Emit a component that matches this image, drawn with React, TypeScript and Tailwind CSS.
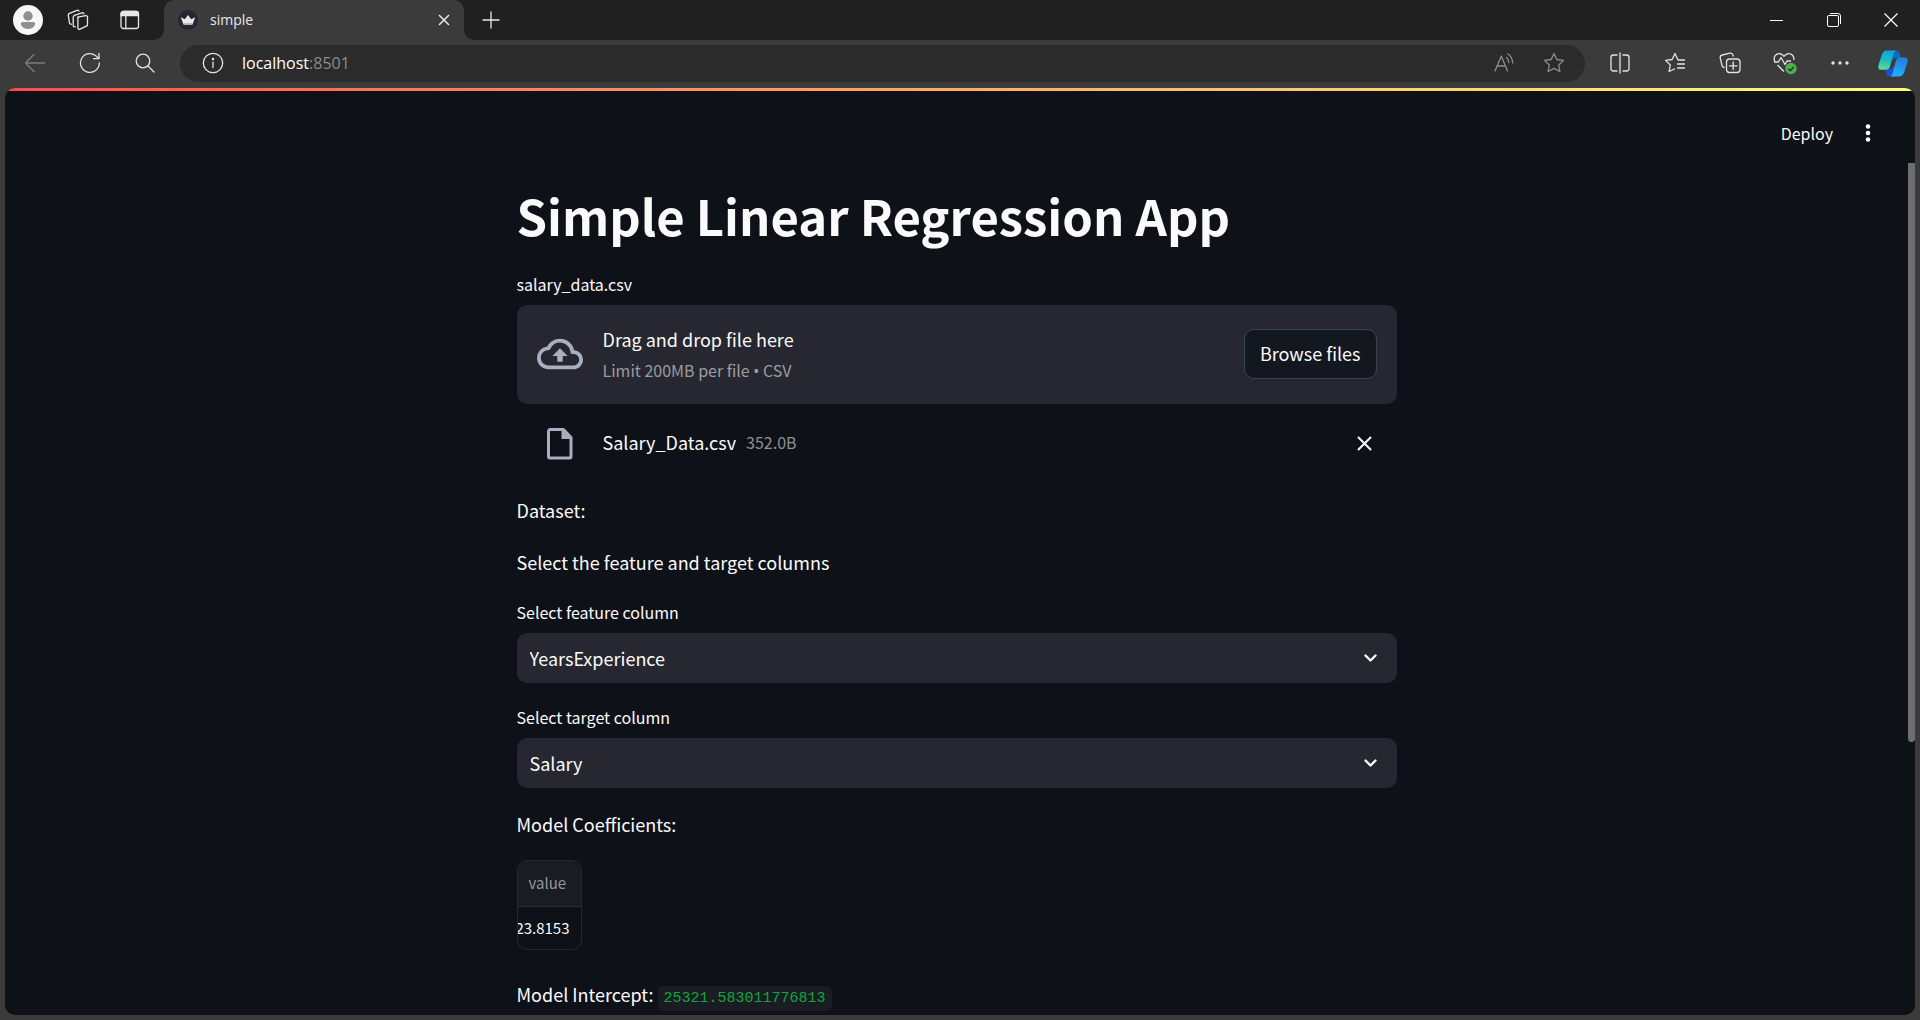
import { useState } from "react";
import type { ReactNode } from "react";

const columns = ["YearsExperience", "Salary"];

function Svg({ size = 22, children }: { size?: number; children: ReactNode }) {
  return (
    <svg
      width={size}
      height={size}
      viewBox="0 0 22 22"
      fill="none"
      stroke="currentColor"
      strokeWidth="1.3"
      strokeLinecap="round"
      strokeLinejoin="round"
      aria-hidden="true"
    >
      {children}
    </svg>
  );
}

function ToolButton({ label, className = "", children }: { label: string; className?: string; children: ReactNode }) {
  return (
    <button type="button" aria-label={label} className={`flex h-full shrink-0 items-center justify-center ${className}`}>
      {children}
    </button>
  );
}

function TabStrip() {
  return (
    <div className="flex h-10 items-stretch bg-[#202020] pr-px text-[#e8e8e8]">
      <ToolButton label="Profile" className="w-14">
        <svg width="30" height="30" viewBox="0 0 30 30" aria-hidden="true">
          <circle cx="15" cy="15" r="15" fill="#f7f7f7" />
          <circle cx="15" cy="11" r="4.7" fill="#8f8f8f" />
          <path d="M9.5 17h11a1.6 1.6 0 0 1 1.6 1.6c0 3-3 5.4-7.100 5.400s-7.100-2.400-7.100-5.400A1.600 1.600 0 0 1 9.500 17z" fill="#8f8f8f" />
        </svg>
      </ToolButton>
      <ToolButton label="Workspaces" className="w-[43px]">
        <Svg>
          <path d="M10.500 8.200l8.300-1.500a1.500 1.500 0 0 1 1.700 1.500v7.500a1.500 1.500 0 0 1-1.200 1.500l-6.200 3a1.500 1.500 0 0 1-2-.6 1.500 1.500 0 0 1-.2-.8V9.500a1.400 1.400 0 0 1 .8-1.300z" />
          <path d="M8.200 17.600a1.500 1.500 0 0 1-2-.7V8a2 2 0 0 1 1.200-1.700l7.600-2.500a1.500 1.500 0 0 1 1.900 1" />
          <path d="M4.400 15.200a1.500 1.500 0 0 1-1.900-1.200L1.300 6.300a1.800 1.800 0 0 1 1.200-1.900L10 1.300a1.500 1.500 0 0 1 1.900.8" />
        </Svg>
      </ToolButton>
      <ToolButton label="Tab actions" className="w-[55px] pl-[7px]">
        <Svg>
          <path d="M4.500 2.500h12.500a2.500 2.500 0 0 1 2.500 2.500v1.500H2V5a2.500 2.500 0 0 1 2.500-2.500z" fill="currentColor" />
          <rect x="2" y="2.500" width="17.500" height="17" rx="2.500" />
          <path d="M6.800 7v12" />
        </Svg>
      </ToolButton>
      <svg width="10" height="10" viewBox="0 0 10 10" className="self-end" aria-hidden="true">
        <path d="M10 0v10H0A10 10 0 0 0 10 0z" fill="#3b3b3b" />
      </svg>
      <div className="flex w-[300px] items-center rounded-t-[10px] bg-[#3b3b3b] pl-[14px] pr-3">
        <svg width="20" height="20" viewBox="0 0 20 20" aria-hidden="true">
          <circle cx="10" cy="10" r="10" fill="#262730" />
          <path d="M2.800 7.200l4 2 3.200-4.200 3.200 4.200 4-2-2.700 7.300H5.500z" fill="#e9e9ea" />
          <path d="M5.300 13h9.400l-.6 1.800H5.900z" fill="#bdbdc2" />
        </svg>
        <span className="ml-3 flex-1 text-[14px] leading-5">simple</span>
        <button type="button" aria-label="Close tab" className="flex size-4 items-center justify-center">
          <svg width="12" height="12" viewBox="0 0 12 12" stroke="currentColor" strokeWidth="1.5" aria-hidden="true">
            <path d="M1 1l10 10M11 1L1 11" />
          </svg>
        </button>
      </div>
      <svg width="10" height="10" viewBox="0 0 10 10" className="self-end" aria-hidden="true">
        <path d="M0 0v10h10A10 10 0 0 1 0 0z" fill="#3b3b3b" />
      </svg>
      <ToolButton label="New tab" className="w-[34px]">
        <svg width="18" height="18" viewBox="0 0 18 18" stroke="currentColor" strokeWidth="1.300" aria-hidden="true">
          <path d="M9 .5v17M.5 9h17" />
        </svg>
      </ToolButton>
      <div className="flex-1" />
      <ToolButton label="Minimize" className="w-[57px]">
        <svg width="13" height="13" viewBox="0 0 13 13" stroke="#fff" aria-hidden="true">
          <path d="M0 6.500h13" />
        </svg>
      </ToolButton>
      <ToolButton label="Restore" className="w-[57px]">
        <svg width="14" height="14" viewBox="0 0 14 14" fill="none" stroke="#fff" aria-hidden="true">
          <rect x=".5" y="2.500" width="11" height="11" rx="1.500" />
          <path d="M3 .5h8a2.500 2.500 0 0 1 2.500 2.500v8" />
        </svg>
      </ToolButton>
      <ToolButton label="Close" className="w-[57px]">
        <svg width="14" height="14" viewBox="0 0 14 14" stroke="#fff" strokeWidth="1.200" aria-hidden="true">
          <path d="M.5.5l13 13M13.500.5l-13 13" />
        </svg>
      </ToolButton>
    </div>
  );
}

function Copilot() {
  return (
    <svg width="30" height="27" viewBox="0 0 90 80" aria-hidden="true">
      <defs>
        <linearGradient id="cp-left" x1="0.500" y1="0" x2="0.300" y2="1">
          <stop offset="0" stopColor="#0da5e0" />
          <stop offset="0.500" stopColor="#22bcc0" />
          <stop offset="1" stopColor="#62dc93" />
        </linearGradient>
        <linearGradient id="cp-right" x1="0.600" y1="0" x2="0.400" y2="1">
          <stop offset="0" stopColor="#2a78de" />
          <stop offset="1" stopColor="#19b5f8" />
        </linearGradient>
      </defs>
      <path d="M40 1h14c6 0 9 3 11 9l4 14H56c-8 0-12 4-14 10z" fill="#0a6fae" />
      <path d="M50 79H36c-6 0-9-3-11-9l-4-14h13c8 0 12-4 14-10z" fill="#1f4fd8" />
      <path d="M26 1h28c-5 2-7 7-9 13l-8 32c-3 9-6 13-14 13H10C2 59-1 53 2 44l9-29C14 6 18 1 26 1z" fill="url(#cp-left)" />
      <path d="M64 79H36c5-2 7-7 9-13l8-32c3-9 6-13 14-13h13c8 0 11 6 8 15l-9 29c-3 9-7 14-15 14z" fill="url(#cp-right)" />
    </svg>
  );
}

function Toolbar() {
  const star = "M11 1.500l2.900 6 6.600.9-4.800 4.600 1.200 6.500L11 16.400l-5.900 3.100 1.200-6.500L1.500 8.400l6.600-.9z";
  return (
    <div className="flex h-12 items-center bg-[#3b3b3b] pr-px pb-[2px] pl-[7px] text-[#e4e4e4]">
      <ToolButton label="Back" className="w-[55px] text-[#7d7d7d]">
        <Svg>
          <path d="M20.500 11H1.500M10 2.500L1.500 11l8.500 8.500" />
        </Svg>
      </ToolButton>
      <ToolButton label="Refresh" className="w-[55px]">
        <Svg>
          <path d="M20.300 11a9.400 9.400 0 1 1-2.700-6.600l1.900 2.100M20 1.500v5.200h-5.300" />
        </Svg>
      </ToolButton>
      <ToolButton label="Search" className="w-[55px]">
        <Svg>
          <circle cx="9" cy="9" r="6.800" />
          <path d="M14 14l6 6" />
        </Svg>
      </ToolButton>
      <div className="ml-2 flex h-[37px] flex-1 items-center rounded-full bg-[#2b2b2b]">
        <ToolButton label="View site information" className="w-[62px] pl-[3px]">
          <Svg>
            <circle cx="11" cy="11" r="9.700" />
            <path d="M11 10v5.500" />
            <circle cx="11" cy="7" r=".6" fill="currentColor" />
          </Svg>
        </ToolButton>
        <p className="flex-1 text-[16px] leading-6 text-white">
          localhost<span className="text-[#8b8b8b]">:8501</span>
        </p>
        <ToolButton label="Read aloud" className="w-[50px] text-[#8f8f8f]">
          <Svg>
            <path d="M2 19L8.300 4l6.200 15M4.300 14h8M13.500 5.500c1.500 1 2.300 2.600 2.300 5M14.800 2c2.800 1.500 4.600 4.500 4.900 9" />
          </Svg>
        </ToolButton>
        <ToolButton label="Add to favorites" className="mr-[6px] w-[50px] text-[#8f8f8f]">
          <Svg>
            <path d={star} />
          </Svg>
        </ToolButton>
      </div>
      <ToolButton label="Split screen" className="ml-[7px] w-[55px]">
        <Svg>
          <path d="M11 1v20M8 3H4.500A2.500 2.500 0 0 0 2 5.500v11A2.500 2.500 0 0 0 4.500 19H8M14 3h3.500A2.500 2.500 0 0 1 20 5.500v11a2.500 2.500 0 0 1-2.500 2.500H14" />
        </Svg>
      </ToolButton>
      <ToolButton label="Favorites" className="w-[55px]">
        <Svg>
          <path d="M20.500 8H14L11 1.500 8.100 7.500l-6.600.9 4.800 4.600-1.200 6.500L10.500 17M13.500 12h7M13.500 16h7" />
        </Svg>
      </ToolButton>
      <ToolButton label="Collections" className="w-[55px]">
        <Svg>
          <rect x="7.500" y="7" width="13.500" height="13.500" rx="3" />
          <path d="M14.200 10v7.500M10.500 13.800H18M5 15.500a2.700 2.700 0 0 1-2-2L1.300 6.300A2.700 2.700 0 0 1 3.200 3l7.500-1.800a2.700 2.700 0 0 1 3.300 2l.2.800" />
        </Svg>
      </ToolButton>
      <ToolButton label="Browser essentials" className="w-[55px]">
        <svg width="24" height="24" viewBox="0 0 24 24" fill="none" stroke="currentColor" strokeWidth="1.300" strokeLinejoin="round" aria-hidden="true">
          <path d="M2 11C-.5 5.500 3.500 2.500 6.500 2.700c2 .1 3.500 1.300 4.500 2.600 1-1.300 2.500-2.500 4.500-2.600 3-.2 6 2.300 5.300 6.300M1 11h4.500L8 6.500l4 7 2-3.500h4M4.500 14l6.500 6.500" />
          <circle cx="18" cy="17.500" r="5.700" fill="#4caf50" stroke="none" />
          <path d="M15.300 17.700l2 2 3.500-4" stroke="#163b18" />
        </svg>
      </ToolButton>
      <ToolButton label="Settings and more" className="w-[55px]">
        <svg width="18" height="4" viewBox="0 0 18 4" fill="currentColor" aria-hidden="true">
          <circle cx="2" cy="2" r="1.700" />
          <circle cx="9" cy="2" r="1.700" />
          <circle cx="16" cy="2" r="1.700" />
        </svg>
      </ToolButton>
      <ToolButton label="Copilot" className="w-[52px]">
        <Copilot />
      </ToolButton>
    </div>
  );
}

function SelectField({ id, label, initial }: { id: string; label: string; initial: string }) {
  const [value, setValue] = useState(initial);
  return (
    <div className="mt-[22px] flex flex-col gap-[9px]">
      <label htmlFor={id} className="text-[16px] leading-6">
        {label}
      </label>
      <div className="relative">
        <select
          id={id}
          value={value}
          onChange={(e) => setValue(e.target.value)}
          className="block h-[50px] w-full appearance-none rounded-[10px] bg-[#262730] px-[13px] text-[18px] leading-7 text-[#fafafa]"
        >
          {columns.map((c) => (
            <option key={c}>{c}</option>
          ))}
        </select>
        <svg
          width="13"
          height="8"
          viewBox="0 0 13 8"
          fill="none"
          stroke="#fafafa"
          strokeWidth="2.400"
          strokeLinecap="round"
          strokeLinejoin="round"
          className="pointer-events-none absolute top-[21px] right-5"
          aria-hidden="true"
        >
          <path d="M1.500 1.500l5 5 5-5" />
        </svg>
      </div>
    </div>
  );
}

function Uploader() {
  return (
    <section className="mt-[27px] flex flex-col">
      <label htmlFor="csv-file" className="text-[16px] leading-6">
        salary_data.csv
      </label>
      <input id="csv-file" type="file" accept=".csv" className="sr-only" />
      <div className="mt-[9px] flex h-[99px] items-center rounded-[10px] bg-[#262730] px-5">
        <svg width="46" height="46" viewBox="0 0 24 24" fill="#a9aec1" className="mb-px" aria-hidden="true">
          <path d="M19.350 10.040A7.490 7.490 0 0 0 12 4C9.110 4 6.600 5.640 5.350 8.040A5.994 5.994 0 0 0 0 14c0 3.310 2.690 6 6 6h13c2.760 0 5-2.240 5-5 0-2.640-2.050-4.780-4.650-4.960zM19 18H6c-2.210 0-4-1.790-4-4 0-2.050 1.530-3.760 3.560-3.970l1.070-.11.5-.95A5.469 5.469 0 0 1 12 6c2.620 0 4.880 1.860 5.390 4.430l.3 1.500 1.530.11A2.980 2.980 0 0 1 22 15c0 1.650-1.350 3-3 3zM8 13h2.550v3h2.900v-3H16l-4-4z" />
        </svg>
        <div className="ml-5 flex-1">
          <p className="text-[18px] leading-8">Drag and drop file here</p>
          <p className="text-[16px] leading-[30px] text-[#9c9da1]">
            Limit 200MB per file <span className="font-['Noto_Sans',sans-serif]">•</span> CSV
          </p>
        </div>
        <button
          type="button"
          className="mb-px flex h-[50px] items-center rounded-[10px] border border-[#41434a] bg-[#131720] px-[15px] pb-[2px] text-[18px] leading-8 whitespace-nowrap"
        >
          Browse files
        </button>
      </div>
      <div className="mt-[19px] flex h-10 items-center px-5">
        <svg width="46" height="36" viewBox="0 0 46 36" fill="none" aria-hidden="true">
          <path d="M12.500 4.500h14l7.500 8v19a1.500 1.500 0 0 1-1.500 1.500H13a1.500 1.500 0 0 1-1.500-1.500V6z" stroke="#a9aec1" strokeWidth="3" strokeLinejoin="round" />
          <path d="M24.500 4l10 10h-10z" fill="#a9aec1" />
        </svg>
        <p className="ml-5 flex flex-1 items-center gap-[10px] pb-[2px] leading-8">
          <span className="text-[18px]">Salary_Data.csv</span>
          <span className="text-[16px] text-[#8f9093]">352.0B</span>
        </p>
        <button type="button" aria-label="Remove file" className="mr-[5px]">
          <svg width="15" height="15" viewBox="0 0 15 15" stroke="#fafafa" strokeWidth="2" strokeLinecap="round" aria-hidden="true">
            <path d="M1.500 1.500l12 12M13.500 1.500l-12 12" />
          </svg>
        </button>
      </div>
    </section>
  );
}

export default function App() {
  return (
    <div className="flex h-screen flex-col overflow-hidden bg-[#3b3b3b] font-['Open_Sans','Noto_Sans',sans-serif]">
      <TabStrip />
      <Toolbar />
      <div className="mx-[5px] mb-[5px] flex min-h-0 flex-1 flex-col overflow-hidden rounded-[10px] bg-[#0e1117] font-['Noto_Sans_CJK_SC',sans-serif] text-[#fafafa]">
        <div className="h-[3px] shrink-0 bg-linear-to-r from-[#ff4b4b] to-[#fffd80]" />
        <header className="flex h-[72px] shrink-0 items-center justify-end pt-3 pr-[44px]">
          <button type="button" className="pb-px text-[16px] leading-6">
            Deploy
          </button>
          <button type="button" aria-label="Main menu" className="ml-8">
            <svg width="6" height="18" viewBox="0 0 6 18" fill="#fafafa" aria-hidden="true">
              <circle cx="3" cy="2.500" r="2.300" />
              <circle cx="3" cy="9" r="2.300" />
              <circle cx="3" cy="15.500" r="2.300" />
            </svg>
          </button>
        </header>
        <div className="flex min-h-0 flex-1">
          <main className="flex-1 overflow-hidden">
            <div className="mx-auto flex max-w-[880px] flex-col pt-[22px]">
              <h1 className="text-[49px] leading-[60px] font-bold">Simple Linear Regression App</h1>
              <Uploader />
              <p className="mt-[31px] text-[18px] leading-8">Dataset:</p>
              <p className="mt-5 text-[18px] leading-8">Select the feature and target columns</p>
              <SelectField id="feature" label="Select feature column" initial="YearsExperience" />
              <SelectField id="target" label="Select target column" initial="Salary" />
              <p className="mt-5 text-[18px] leading-8">Model Coefficients:</p>
              <div className="mt-5 w-[65px] overflow-hidden rounded-[10px] border border-[#26282d]">
                <table className="w-full table-fixed border-collapse text-[15px]">
                  <thead>
                    <tr className="h-[45px] border-b border-[#2b2d33] bg-[#1a1c23]">
                      <th scope="col" className="pl-[11px] text-left font-normal text-[#96979b]">
                        value
                      </th>
                    </tr>
                  </thead>
                  <tbody>
                    <tr className="h-[43px]">
                      <td>
                        <div className="flex justify-end overflow-hidden pr-[11px]">23.8153</div>
                      </td>
                    </tr>
                  </tbody>
                </table>
              </div>
              <p className="mt-7 text-[18px] leading-8 whitespace-nowrap">
                Model Intercept:{" "}
                <code className="rounded-[5px] bg-[#1a1c24] px-[6px] py-1 font-['Liberation_Mono',monospace] text-[15px] text-[#12a53c]">
                  25321.583011776813
                </code>
              </p>
            </div>
          </main>
          <div className="w-[7px]">
            <div className="h-[68%] rounded-b-full bg-[#6d6e73]" />
          </div>
        </div>
      </div>
    </div>
  );
}
